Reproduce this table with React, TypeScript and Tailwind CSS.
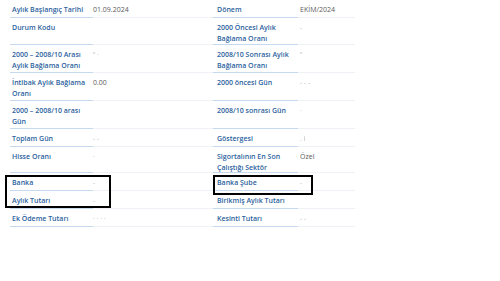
import React from 'react';

type Row = {
  h: string;
  l1: string;
  v1: React.ReactNode;
  l2: string;
  v2: React.ReactNode;
};

const Hidden = ({ text = '- -' }: { text?: string }) => (
  <span className="text-[#b8bcc4] blur-[0.6px]">{text}</span>
);

const rows: Row[] = [
  { h: 'h-[18px]', l1: 'Aylık Başlangıç Tarihi', v1: '01.09.2024', l2: 'Dönem', v2: 'EKİM/2024' },
  { h: 'h-[27px]', l1: 'Durum Kodu', v1: '', l2: '2000 Öncesi Aylık Bağlama Oranı', v2: <Hidden text="-" /> },
  { h: 'h-[28px]', l1: '2000 – 2008/10 Arası Aylık Bağlama Oranı', v1: <Hidden text="“ ·" />, l2: '2008/10 Sonrası Aylık Bağlama Oranı', v2: <Hidden text="‘‘" /> },
  { h: 'h-[28px]', l1: 'İntibak Aylık Bağlama Oranı', v1: '0.00', l2: '2000 öncesi Gün', v2: <Hidden text="- - -" /> },
  { h: 'h-[28px]', l1: '2000 – 2008/10 arası Gün', v1: '', l2: '2008/10 sonrası Gün', v2: <Hidden text="·" /> },
  { h: 'h-[18px]', l1: 'Toplam Gün', v1: <Hidden text="- -" />, l2: 'Göstergesi', v2: <Hidden text=". i" /> },
  { h: 'h-[26px]', l1: 'Hisse Oranı', v1: <Hidden text="·" />, l2: 'Sigortalının En Son Çalıştığı Sektör', v2: 'Özel' },
  { h: 'h-[18px]', l1: 'Banka', v1: <Hidden text="-" />, l2: 'Banka Şube', v2: <Hidden text="-" /> },
  { h: 'h-[18px]', l1: 'Aylık Tutarı', v1: <Hidden text="-" />, l2: 'Birikmiş Aylık Tutarı', v2: '' },
  { h: 'h-[18px]', l1: 'Ek Ödeme Tutarı', v1: <Hidden text="·  ·  ·   ·" />, l2: 'Kesinti Tutarı', v2: <Hidden text="- -" /> },
];

export default function App() {
  return (
    <div className="w-[500px] h-[281px] bg-white font-['Open_Sans',sans-serif] text-[7px] leading-[11px]">
      <div className="relative pl-[10px]">
        <div className="grid grid-cols-[83px_120px_85px_57px]">
          {rows.map((r, i) => (
            <React.Fragment key={i}>
              <div className={`${r.h} pt-[4px] pl-[2px] pr-[4px] border-b border-[#c6d9ef] text-[#2c5f9e] font-semibold`}>
                {r.l1}
              </div>
              <div className={`${r.h} pt-[4px] border-b border-[#eef2f7] text-[#5b5b5b]`}>{r.v1}</div>
              <div className={`${r.h} pt-[4px] pl-[4px] pr-[4px] border-b border-[#c6d9ef] text-[#2c5f9e] font-semibold`}>
                {r.l2}
              </div>
              <div className={`${r.h} pt-[4px] pl-[2px] border-b border-[#eef2f7] text-[#5b5b5b]`}>{r.v2}</div>
            </React.Fragment>
          ))}
        </div>

        {/* annotation boxes */}
        <div className="absolute left-[5px] top-[175px] w-[106px] h-[33px] border-2 border-black" />
        <div className="absolute left-[213px] top-[175px] w-[100px] h-[20px] border-2 border-black" />
      </div>
    </div>
  );
}
